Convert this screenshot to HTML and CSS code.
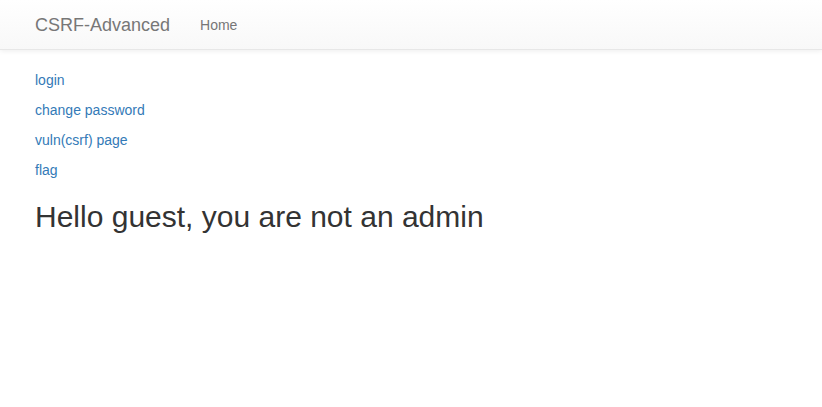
FILE: index.html
```html
<!DOCTYPE html>
<html>
<head>
<meta charset="utf-8">
<title>CSRF-Advanced</title>
<link rel="stylesheet" href="styles.css">
</head>
<body>
<nav class="navbar">
  <div class="navbar-inner">
    <a class="brand" href="#">CSRF-Advanced</a>
    <a class="nav-link" href="#">Home</a>
  </div>
</nav>
<main class="content">
  <p><a href="#">login</a></p>
  <p><a href="#">change password</a></p>
  <p><a href="#">vuln(csrf) page</a></p>
  <p><a href="#">flag</a></p>
  <h2 class="greeting">Hello guest, you are not an admin</h2>
</main>
</body>
</html>
```
FILE: styles.css
```css
html, body {
  margin: 0;
  padding: 0;
}
body {
  font-family: "Liberation Sans", Arial, Helvetica, sans-serif;
  font-size: 14px;
  line-height: 20px;
  color: #333;
  background: #fff;
}
a {
  color: #337ab7;
  text-decoration: none;
}
.navbar {
  height: 49px;
  border-bottom: 1px solid #e7e7e7;
  background-image: linear-gradient(to bottom, #fff 0, #f8f8f8 100%);
  box-shadow: 0 1px 5px rgba(0, 0, 0, 0.075);
  margin-bottom: 20px;
}
.navbar-inner {
  display: flex;
  align-items: center;
  height: 49px;
  padding-left: 20px;
}
.brand {
  font-size: 18px;
  line-height: 20px;
  padding: 15px;
  color: #777;
}
.nav-link {
  font-size: 14px;
  line-height: 20px;
  padding: 15px;
  color: #777;
}
.content {
  padding: 0 35px;
}
.content p {
  margin: 0 0 10px;
}
.greeting {
  margin: 20px 0 10px;
  font-size: 30px;
  font-weight: 500;
  line-height: 1.1;
  color: #333;
}
```
